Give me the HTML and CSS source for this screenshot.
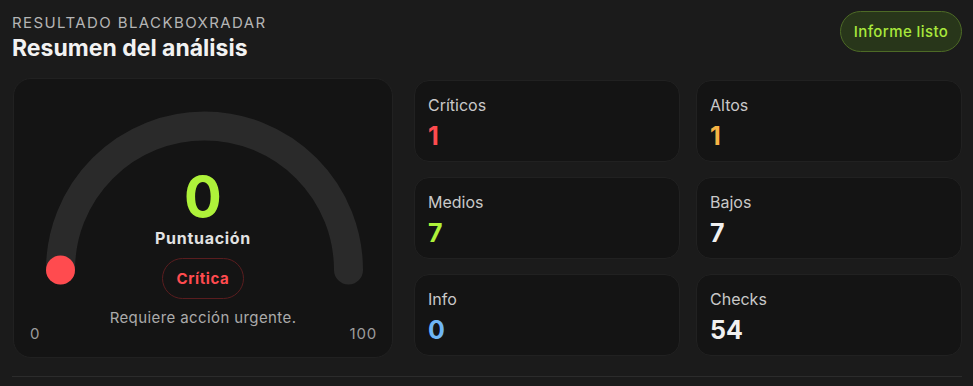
FILE: index.html
```html
<!DOCTYPE html>
<html lang="es">
<head>
<meta charset="utf-8">
<title>Resumen del análisis</title>
<link rel="stylesheet" href="styles.css">
</head>
<body>
<div class="page">
  <header class="header">
    <div class="titles">
      <div class="eyebrow">RESULTADO BLACKBOXRADAR</div>
      <h1 class="title">Resumen del análisis</h1>
    </div>
    <div class="status-pill">Informe listo</div>
  </header>

  <section class="main">
    <div class="gauge-card">
      <svg class="gauge-svg" width="380" height="280" viewBox="0 0 380 280" aria-hidden="true">
        <path d="M 47.5 192 A 144 144 0 0 1 335.5 192" fill="none" stroke="#2a2a2a" stroke-width="29" stroke-linecap="round"/>
        <circle cx="47.5" cy="192" r="14.5" fill="#ff4b4f"/>
      </svg>
      <div class="gauge-content">
        <div class="score">0</div>
        <div class="score-label">Puntuación</div>
        <div class="level-pill">Crítica</div>
        <div class="advice">Requiere acción urgente.</div>
        <div class="scale">
          <span>0</span>
          <span>100</span>
        </div>
      </div>
    </div>

    <div class="stats">
      <div class="stat">
        <div class="stat-label">Críticos</div>
        <div class="stat-value red">1</div>
      </div>
      <div class="stat">
        <div class="stat-label">Altos</div>
        <div class="stat-value orange">1</div>
      </div>
      <div class="stat">
        <div class="stat-label">Medios</div>
        <div class="stat-value green">7</div>
      </div>
      <div class="stat">
        <div class="stat-label">Bajos</div>
        <div class="stat-value white">7</div>
      </div>
      <div class="stat">
        <div class="stat-label">Info</div>
        <div class="stat-value blue">0</div>
      </div>
      <div class="stat">
        <div class="stat-label">Checks</div>
        <div class="stat-value white">54</div>
      </div>
    </div>
  </section>

  <div class="divider"></div>
</div>
</body>
</html>
```

FILE: styles.css
```css
* { box-sizing: border-box; }

html, body {
  margin: 0;
  padding: 0;
  background: #1b1b1b;
}

body {
  font-family: Inter, "Noto Sans", "Liberation Sans", sans-serif;
  color: #e8e8e8;
  width: 973px;
  height: 386px;
  overflow: hidden;
}

.page {
  padding: 0 11px 0 12px;
}

.header {
  display: flex;
  justify-content: space-between;
  align-items: flex-start;
}

.titles {
  padding-top: 14px;
}

.eyebrow {
  font-size: 15px;
  line-height: 18px;
  letter-spacing: 1.4px;
  color: #b5b5b5;
  font-weight: 400;
}

.title {
  margin: 2px 0 0;
  font-size: 23px;
  line-height: 28px;
  font-weight: 700;
  letter-spacing: 0;
  color: #f2f2f2;
}

.status-pill {
  margin-top: 11px;
  height: 41px;
  width: 122px;
  border-radius: 21px;
  background: #28361a;
  border: 1.5px solid #4d6a26;
  color: #a9e83c;
  font-size: 15px;
  font-weight: 500;
  letter-spacing: 0.4px;
  display: flex;
  align-items: center;
  justify-content: center;
}

.main {
  margin-top: 16px;
  margin-left: 1px;
  display: grid;
  grid-template-columns: 380px 1fr;
  column-gap: 21px;
  align-items: center;
}

.gauge-card {
  position: relative;
  height: 280px;
  border-radius: 18px;
  background: #141414;
  border: 1px solid #212121;
  overflow: hidden;
}

.gauge-svg {
  position: absolute;
  left: -1px;
  top: -1px;
}

.gauge-content {
  position: relative;
  display: flex;
  flex-direction: column;
  align-items: center;
  padding-top: 90px;
}

.score {
  font-size: 56px;
  line-height: 56px;
  font-weight: 700;
  color: #aef23a;
}

.score-label {
  margin-top: 3px;
  font-size: 16px;
  line-height: 20px;
  font-weight: 700;
  letter-spacing: 0.7px;
  color: #e2e2e2;
}

.level-pill {
  margin-top: 10px;
  width: 82px;
  height: 41px;
  border-radius: 21px;
  border: 1.5px solid #5a1d1f;
  color: #ff4b4f;
  font-size: 15px;
  font-weight: 700;
  letter-spacing: 0.6px;
  display: flex;
  align-items: center;
  justify-content: center;
}

.advice {
  margin-top: 10px;
  font-size: 15px;
  line-height: 18px;
  letter-spacing: 0.4px;
  color: #ababab;
}

.scale {
  align-self: stretch;
  display: flex;
  justify-content: space-between;
  padding: 0 15px 0 16px;
  margin-top: -2px;
  font-size: 15px;
  line-height: 18px;
  letter-spacing: 0.8px;
  color: #9c9c9c;
}

.stats {
  display: grid;
  grid-template-columns: 1fr 1fr;
  grid-template-rows: repeat(3, 82px);
  gap: 15px 16px;
}

.stat {
  background: #141414;
  border: 1px solid #212121;
  border-radius: 15px;
  padding: 14px 14px 0 13px;
}

.stat-label {
  font-size: 16px;
  line-height: 20px;
  color: #c9c9c9;
}

.stat-value {
  margin-top: 6px;
  font-size: 25px;
  line-height: 30px;
  font-weight: 700;
}

.red { color: #ff4b4f; }
.orange { color: #f7b445; }
.green { color: #aef23a; }
.white { color: #f0f0f0; }
.blue { color: #6fb6f5; }

.divider {
  margin-top: 18px;
  height: 1px;
  background: #2c2c2c;
}
```
